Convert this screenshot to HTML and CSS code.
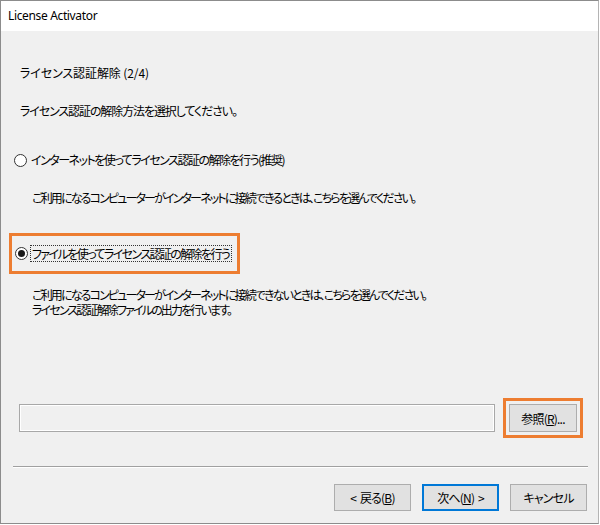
FILE: index.html
```html
<!DOCTYPE html>
<html lang="ja">
<head>
<meta charset="utf-8">
<link rel="stylesheet" href="styles.css">
</head>
<body>
<div class="window">
  <div class="titlebar">License Activator</div>
  <div class="content">
    <div class="heading">ライセンス認証解除 (2/4)</div>
    <div class="instruction">ライセンス認証の解除方法を選択してください。</div>
    <div class="radio-row first">
      <span class="radio"></span>
      <span class="label">インターネットを使ってライセンス認証の解除を行う(推奨)</span>
    </div>
    <div class="desc">ご利用になるコンピューターがインターネットに接続できるときは、こちらを選んでください。</div>
    <div class="highlight hl-radio">
      <div class="radio-row">
        <span class="radio checked"></span>
        <span class="label focus">ファイルを使ってライセンス認証の解除を行う</span>
      </div>
    </div>
    <div class="desc two">ご利用になるコンピューターがインターネットに接続できないときは、こちらを選んでください。<br>ライセンス認証解除ファイルの出力を行います。</div>
    <div class="file-row">
      <div class="textbox"></div>
      <div class="highlight hl-btn">
        <button class="btn browse">参照(<u>R</u>)...</button>
      </div>
    </div>
    <div class="separator"></div>
    <div class="buttons">
      <button class="btn">&lt;&nbsp; 戻る(<u>B</u>)</button>
      <button class="btn default">次へ(<u>N</u>)&nbsp; &gt;</button>
      <button class="btn">キャンセル</button>
    </div>
  </div>
</div>
</body>
</html>
```
FILE: styles.css
```css
html, body {
  margin: 0;
  padding: 0;
  background: #ffffff;
}
body {
  font-family: "Noto Sans", "Noto Sans CJK JP", sans-serif;
  font-size: 12px;
  color: #000;
}
.window {
  width: 597px;
  height: 522px;
  border: 1px solid #8c8c8c;
  border-right-color: #b4b4b4;
  display: flex;
  flex-direction: column;
  overflow: hidden;
}
.titlebar {
  height: 30px;
  line-height: 30px;
  padding-left: 7px;
  background: #fff;
  font-size: 12px;
  letter-spacing: -0.35px;
  flex: none;
}
.content {
  flex: 1;
  background: #f0f0f0;
  display: flex;
  flex-direction: column;
  padding-left: 13px;
  font-family: "Noto Sans CJK JP", sans-serif;
  font-feature-settings: "palt";
  letter-spacing: -1.1px;
}
.heading, .instruction, .desc, .label {
  line-height: 16px;
  white-space: nowrap;
}
.heading {
  margin-top: 34px;
  margin-left: 6px;
  letter-spacing: -0.1px;
}
.instruction {
  margin-top: 22px;
  margin-left: 6px;
}
.radio-row {
  display: flex;
  align-items: center;
  height: 16px;
}
.radio-row.first {
  margin-top: 33px;
}
.label {
  letter-spacing: -1.5px;
}
.radio {
  width: 11px;
  height: 11px;
  border: 1px solid #333;
  border-radius: 50%;
  background: #fff;
  margin-right: 4px;
  flex: none;
  display: flex;
  align-items: center;
  justify-content: center;
}
.radio.checked::after {
  content: "";
  width: 7px;
  height: 7px;
  border-radius: 50%;
  background: #1a1a1a;
}
.desc {
  margin-left: 18px;
  margin-top: 22px;
  letter-spacing: -1.85px;
}
.desc.two {
  margin-top: 13px;
  line-height: 15px;
}
.highlight {
  border: 3px solid #ed7d31;
  box-sizing: border-box;
}
.hl-radio {
  margin-top: 27px;
  margin-left: -5px;
  width: 231px;
  height: 41px;
  padding-left: 3px;
  display: flex;
  align-items: center;
}
.label.focus {
  outline: 1px dotted #333;
  outline-offset: 0;
  padding: 0 2px 0 1px;
  margin-left: -1px;
  line-height: 15px;
  letter-spacing: -1.6px;
}
.file-row {
  margin-top: 81px;
  display: flex;
  align-items: center;
  gap: 8px;
  margin-left: 5px;
}
.textbox {
  width: 476px;
  height: 28px;
  box-sizing: border-box;
  border: 1px solid #a8a8a8;
  box-shadow: inset 0 0 0 1px #fff;
  background: #f0f0f0;
}
.hl-btn {
  width: 80px;
  height: 40px;
  padding: 3px;
}
.btn {
  font-family: "Noto Sans CJK JP", sans-serif;
  font-feature-settings: "palt";
  letter-spacing: -0.8px;
  font-size: 12px;
  background: #e1e1e1;
  border: 1px solid #adadad;
  color: #000;
  padding: 0;
  margin: 0;
  height: 27px;
  width: 77px;
  box-sizing: border-box;
}
.btn.browse {
  width: 68px;
  height: 28px;
}
.btn.default {
  border: 2px solid #0078d7;
}
.separator {
  margin-top: 28px;
  margin-left: -1px;
  width: 575px;
  height: 0;
  border-top: 1px solid #a0a0a0;
  border-bottom: 1px solid #ffffff;
}
.buttons {
  margin-top: 16px;
  display: flex;
  justify-content: flex-end;
  gap: 11px;
  width: 573px;
}
u {
  text-decoration: underline;
}
```
